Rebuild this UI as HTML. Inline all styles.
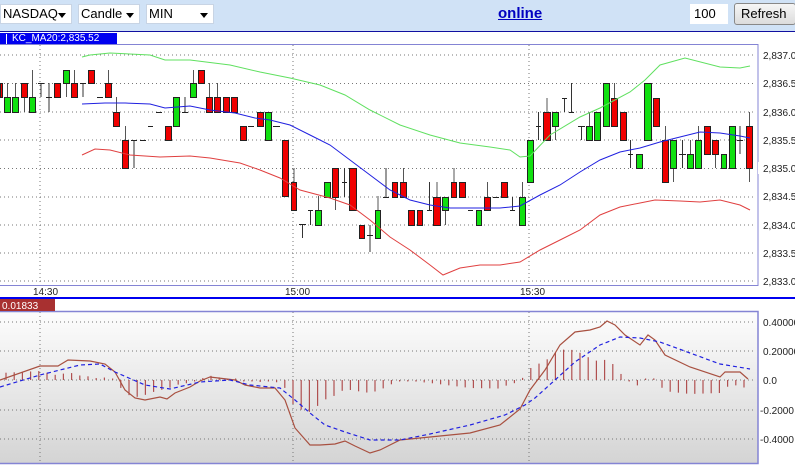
<!DOCTYPE html>
<html><head><meta charset="utf-8"><style>
*{margin:0;padding:0;box-sizing:border-box}
body{width:795px;height:465px;overflow:hidden;background:#fff;font-family:"Liberation Sans",sans-serif;position:relative}
#tb{position:absolute;left:0;top:0;width:795px;height:32px;background:#d0e2f6;border-bottom:1px solid #1010a0}
.sel{position:absolute;top:4px;height:20px;background:#fff;border:1px solid #c8d4e4;font-size:13px;line-height:18px;padding-left:2px;color:#000;overflow:hidden;white-space:nowrap}
.sel:after{content:"";position:absolute;right:5px;top:8px;border-left:4px solid transparent;border-right:4px solid transparent;border-top:5px solid #000}
#online{position:absolute;left:498px;top:5px;font-size:15px;font-weight:bold;color:#0000c0;text-decoration:underline}
#num{position:absolute;left:690px;top:4px;width:38px;height:20px;background:#fff;font-size:13px;line-height:20px;padding-left:4px}
#ref{position:absolute;left:734px;top:3px;width:62px;height:22px;background:linear-gradient(#f6f6f6,#dcdcdc);border:1px solid #888;border-radius:3px;font-size:13px;line-height:20px;padding-left:6px}
#lab{position:absolute;left:0;top:33px;width:117px;height:11px;background:#0000f0;color:#fff;font-size:10px;line-height:11px;padding-left:12px}
#lab:before{content:"";position:absolute;left:6px;top:1px;width:1px;height:10px;background:#fff}
svg{position:absolute;left:0;top:0}
</style></head><body>
<div id="tb">
<div class="sel" style="left:0;width:72px">NASDAQ</div>
<div class="sel" style="left:78px;width:62px">Candle</div>
<div class="sel" style="left:146px;width:68px">MIN</div>
<div id="online">online</div>
<div id="num">100</div>
<div id="ref">Refresh</div>
</div>
<div id="lab">KC_MA20:2,835.52</div>
<svg id="s" width="795" height="465" style="top:0" xmlns="http://www.w3.org/2000/svg">
<defs><linearGradient id="g" x1="0" y1="0" x2="0" y2="1"><stop offset="0" stop-color="#fdfdfd"/><stop offset="1" stop-color="#d4d4d4"/></linearGradient></defs>
<rect x="0" y="312" width="758" height="151" fill="url(#g)"/>
<g id="grid"></g>
<g id="cand"></g>
<g id="macd"></g>
<rect x="-2" y="44.5" width="760" height="241" fill="none" stroke="#8484d4" stroke-width="1"/>
<rect x="-2" y="311.5" width="760" height="152" fill="none" stroke="#8484d4" stroke-width="1.5"/>
<line x1="0" y1="298" x2="795" y2="298" stroke="#0000f0" stroke-width="2"/>
<rect x="0" y="299" width="55" height="12" fill="#a83030"/>
<text x="2" y="309" font-size="10" fill="#fff" font-family="Liberation Sans">0.01833</text>
<g font-family="Liberation Sans" font-size="10" fill="#222">
<text x="763" y="59">2,837.0</text><text x="763" y="87">2,836.5</text><text x="763" y="116">2,836.0</text>
<text x="763" y="144">2,835.5</text><text x="763" y="200">2,834.5</text><text x="763" y="229">2,834.0</text>
<text x="763" y="257">2,833.5</text><text x="763" y="285">2,833.0</text>
<rect x="758" y="162" width="37" height="12" fill="#fff"/><text x="763" y="172">2,835.0</text>
<text x="33" y="295">14:30</text><text x="285" y="295">15:00</text><text x="520" y="295">15:30</text>
<text x="763" y="326">0.40000</text><text x="763" y="355">0.20000</text><text x="763" y="384">0.0</text>
<text x="760" y="414">-0.2000</text><text x="760" y="443">-0.4000</text>
</g>
</svg>
<script>
var NS="http://www.w3.org/2000/svg";
function el(p,t,a){var e=document.createElementNS(NS,t);for(var k in a)e.setAttribute(k,a[k]);p.appendChild(e);return e}
var grid=document.getElementById("grid");
[55,83.5,112,140,168.5,197,225,253,281].forEach(function(y){el(grid,"line",{x1:0,y1:y,x2:756,y2:y,stroke:"#777","stroke-dasharray":"1,3","stroke-width":1})});
[322,351,380,410,439].forEach(function(y){el(grid,"line",{x1:0,y1:y,x2:756,y2:y,stroke:"#777","stroke-dasharray":"1,3","stroke-width":1})});
[40,293,529].forEach(function(x){el(grid,"line",{x1:x,y1:45,x2:x,y2:285,stroke:"#777","stroke-dasharray":"1,3"});el(grid,"line",{x1:x,y1:312,x2:x,y2:463,stroke:"#777","stroke-dasharray":"1,3"})});
var c=document.getElementById("cand");
var C=[[0,3,83,97,'r'],[4,7,97,112,'g',83],[12,7,97,112,'g',83],[21,7,83,97,'r',null,112],[29,7,97,112,'g',70],
[38,6,83,83,'d',83,97],[46,6,97,97,'d',83,112],[54,7,83,97,'r'],[63,7,70,83,'g',null,97],[71,7,83,97,'r',70],
[80,6,83,83,'d',83,97],[88,7,70,83,'r'],[97,6,97,97,'d'],[105,7,83,97,'r',70],[113,7,112,126,'r',97],[122,7,140,168,'r',126],
[131,6,140,140,'d',140,168],[140,6,140,140,'d'],[148,5,126,126,'d'],[156,6,112,112,'d'],[165,7,126,140,'r'],[173,7,97,126,'g'],
[182,6,112,112,'d',97,112],[190,7,83,97,'g',70],[198,7,70,83,'r'],[206,7,97,112,'r',83],[214,7,97,112,'r',83],[223,7,97,112,'r'],[231,7,97,112,'r'],
[240,7,126,140,'r'],[248,6,126,126,'d'],[257,7,112,126,'r'],[265,7,112,140,'g'],[273,7,126,126,'d'],
[282,7,140,196,'r'],[291,6,182,210,'r',168],[299,7,224,224,'d',224,238],[308,5,210,210,'d',210,225],[315,7,210,225,'g',196],
[324,7,182,197,'g'],[332,7,168,197,'r',null,210],[342,5,182,182,'d',168,197],[349,8,168,210,'r'],[359,6,225,238,'r'],
[367,6,235,235,'d',225,252],[375,6,210,238,'g',196],[383,6,197,197,'d',168,197],[392,6,182,197,'r'],[400,7,182,197,'r',168],
[408,7,210,225,'r'],[417,6,210,225,'r'],[427,5,210,210,'d',182,210],[433,8,197,225,'r',182],[442,7,197,210,'g',null,225],
[451,6,182,197,'r',168],[459,7,182,197,'r'],[468,5,210,210,'d'],[476,6,210,225,'g'],[484,7,197,210,'r',182],[493,6,197,197,'d'],
[501,7,182,197,'r'],[510,5,210,210,'d',197,210],[519,7,197,225,'g',182],[527,7,140,182,'g'],[536,5,126,126,'d',112,140],
[543,8,112,140,'r',98],[552,7,112,126,'g',null,140],[562,5,98,98,'d',98,112],[569,5,112,112,'d',83,112],[578,7,126,126,'d',126,140],
[586,7,126,140,'g',112],[594,7,112,140,'g'],[603,7,83,126,'g'],[611,7,98,126,'r',83],[620,7,112,140,'r'],[628,5,154,154,'d',140,168],
[636,7,154,168,'g'],[644,8,83,140,'g'],[653,7,98,126,'r'],[662,7,140,182,'r',126],[670,7,140,168,'g',null,182],[679,7,154,154,'d',140,168],
[687,7,154,168,'g',140],[695,7,140,168,'g',126],[704,7,126,154,'r'],[712,7,140,154,'r',null,168],[721,6,154,168,'g'],[729,7,126,168,'g'],
[737,6,140,140,'d',126,154],[746,7,126,168,'r',112,182]];
C.forEach(function(k){var x=k[0],w=k[1],t=k[2],b=k[3],col=k[4],wt=k[5],wb=k[6];var cx=x+w/2;
 var wc=col=='d'?'#333':'#555';
 if(wt!=null&&wt<t)el(c,"line",{x1:cx,y1:wt,x2:cx,y2:t,stroke:wc});
 if(wb!=null&&wb>b)el(c,"line",{x1:cx,y1:b,x2:cx,y2:wb,stroke:wc});
 if(col=='d'){el(c,"line",{x1:x,y1:t+0.5,x2:x+w,y2:t+0.5,stroke:"#222"});}
 else el(c,"rect",{x:x+0.5,y:t+0.5,width:w-1,height:b-t,fill:col=='r'?'#f00000':'#10e010',stroke:"#222","stroke-width":1});
});
function pl(p,pts,col,extra){var a={points:pts.map(function(q){return q.join(",")}).join(" "),fill:"none",stroke:col,"stroke-width":1};for(var k in extra)a[k]=extra[k];el(p,"polyline",a)}
var G=[[82,57],[90,55],[110,53],[150,55],[165,60],[190,60],[230,65],[260,72],[290,78],[320,85],[345,95],[370,110],[400,125],[430,135],[460,143],[490,147],[510,150],[520,157],[530,156],[550,135],[580,117],[600,108],[630,92],[645,80],[660,65],[685,58],[720,67],[740,68],[750,66]];
var B=[[82,104],[105,103],[125,103],[150,104],[165,108],[190,106],[210,110],[235,113],[255,118],[270,120],[290,125],[310,135],[330,145],[350,160],[370,175],[390,190],[410,200],[430,205],[450,208],[480,208],[500,208],[520,206],[540,195],[560,185],[580,172],[600,160],[620,152],[640,148],[660,142],[680,137],[700,132],[720,133],[740,136],[750,138]];
var R=[[82,155],[95,149],[110,150],[130,155],[160,157],[190,156],[210,158],[240,163],[260,170],[280,178],[300,190],[330,198],[350,205],[370,220],[390,237],[410,250],[430,265],[443,275],[460,268],[480,265],[500,265],[520,262],[540,250],[560,240],[580,230],[600,215],[620,207],[640,203],[655,200],[680,201],[700,202],[720,200],[740,205],[750,210]];
pl(c,G,"#60e060");pl(c,B,"#2020e0");pl(c,R,"#e04040");
var M=[[0,380],[40,366],[58,366],[68,360],[90,361],[105,364],[115,372],[125,390],[135,398],[145,400],[160,397],[167,399],[175,393],[190,387],[200,381],[210,377],[235,380],[245,385],[260,388],[275,388],[285,400],[295,428],[310,445],[320,445],[335,444],[345,441],[355,446],[370,453],[380,450],[400,440],[430,437],[470,433],[500,425],[520,409],[530,390],[545,370],[560,345],[575,332],[590,330],[600,327],[607,321],[615,325],[625,335],[640,345],[648,335],[655,340],[665,355],[690,367],[720,377],[725,372],[740,372],[748,379]];
var S=[[0,387],[40,375],[80,365],[100,364],[115,372],[145,385],[170,389],[200,382],[230,380],[250,385],[280,388],[295,400],[310,413],[325,425],[345,432],[370,440],[400,440],[430,434],[470,425],[505,415],[525,405],[535,398],[555,380],[575,362],[600,345],[620,337],[640,338],[660,342],[690,353],[720,364],[750,369]];
function ip(a,x){for(var i=1;i<a.length;i++){if(x<=a[i][0]){var p=a[i-1],q=a[i];return p[1]+(q[1]-p[1])*(x-p[0])/(q[0]-p[0])}}return a[a.length-1][1]}
var m=document.getElementById("macd");
for(var x=6;x<=748;x+=8.2){var d=ip(M,x)-ip(S,x);if(Math.abs(d)<1.5)d=d<0?-1.5:1.5;el(m,"line",{x1:x,y1:380,x2:x,y2:380+d,stroke:"#b05050","stroke-width":1.2})}
pl(m,M,"#a85040",{"stroke-width":1.2});pl(m,S,"#2020e0",{"stroke-dasharray":"4,3","stroke-width":1.2});
</script>
</body></html>
